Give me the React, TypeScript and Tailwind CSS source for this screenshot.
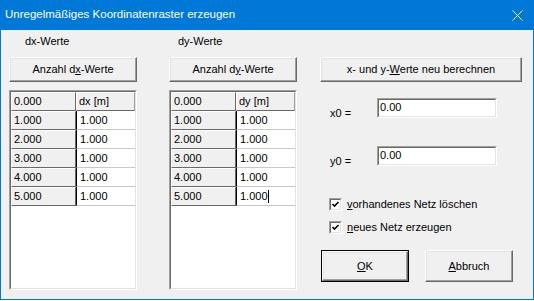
import React from "react";

const raised =
  "border border-t-white border-l-white border-b-[#696969] border-r-[#696969] shadow-[inset_-1px_-1px_0_#a0a0a0,inset_1px_1px_0_#e3e3e3]";

function Btn({ children, className = "" }: { children: React.ReactNode; className?: string }) {
  return (
    <div className={`flex items-center justify-center bg-[#f0f0f0] ${raised} ${className}`}>
      <span>{children}</span>
    </div>
  );
}

const rows = ["1.000", "2.000", "3.000", "4.000", "5.000"];

function Grid({ head }: { head: string }) {
  return (
    <div className="mt-[8px] h-[200px] w-[128px] border border-t-[#a0a0a0] border-l-[#a0a0a0] border-b-white border-r-white">
      <div className="h-full w-full bg-white border border-t-[#696969] border-l-[#696969] border-b-[#e3e3e3] border-r-[#e3e3e3]">
        <div className="flex h-[19px]">
          <div className="w-[65px] bg-[#f0f0f0] border border-t-white border-l-white border-b-[#696969] border-r-[#696969] pl-[2px] leading-[16px]">
            0.000
          </div>
          <div className="flex-1 bg-[#f0f0f0] border border-t-white border-l-white border-b-[#696969] border-r-[#a0a0a0] pl-[2px] leading-[16px]">
            {head}
          </div>
        </div>
        {rows.map((r, i) => (
          <div key={r} className="flex h-[19px]">
            <div className="w-[65px] bg-[#f0f0f0] border border-t-white border-l-white border-b-[#696969] border-r-[#696969] pl-[2px] leading-[16px]">
              {r}
            </div>
            <div className="flex flex-1 border-l border-l-[#000] border-b border-b-[#c8c8c8] pl-[3px] leading-[18px]">
              <span>1.000</span>
              {head === "dy [m]" && i === 4 && <span className="mt-[3px] h-[13px] w-px bg-black" />}
            </div>
          </div>
        ))}
      </div>
    </div>
  );
}

function Field({ label, value, className = "" }: { label: string; value: string; className?: string }) {
  return (
    <div className={`flex h-[20px] ${className}`}>
      <div className="ml-[10px] w-[47px] pt-[9px] leading-[13px]">{label}</div>
      <div className="h-[20px] w-[120px] border border-t-[#a0a0a0] border-l-[#a0a0a0] border-b-white border-r-white">
        <div className="h-full w-full bg-white border border-t-[#696969] border-l-[#696969] border-b-[#e3e3e3] border-r-[#e3e3e3] pl-[1px] leading-[15px]">
          {value}
        </div>
      </div>
    </div>
  );
}

function Check({ children, className = "" }: { children: React.ReactNode; className?: string }) {
  return (
    <div className={`ml-[9px] flex h-[13px] items-center gap-[5px] ${className}`}>
      <div className="h-[13px] w-[13px] border border-t-[#a0a0a0] border-l-[#a0a0a0] border-b-white border-r-white">
        <div className="h-full w-full bg-white border border-t-[#696969] border-l-[#696969] border-b-[#e3e3e3] border-r-[#e3e3e3]">
          <svg width="9" height="9" viewBox="0 0 9 9">
            <path d="M1.5 4 L3.5 6 L7.5 2" stroke="#000" strokeWidth="1.6" fill="none" />
          </svg>
        </div>
      </div>
      <span className="leading-[13px]">{children}</span>
    </div>
  );
}

export default function App() {
  return (
    <div className="h-[300px] w-[534px] text-[11px] text-black font-['Liberation_Sans',Arial,sans-serif]">
      {/* Title bar */}
      <div className="flex h-[30px] items-center justify-between bg-[#0078d7] pl-[5px] pr-[11px] text-[11.5px] text-white">
        <span>Unregelmäßiges Koordinatenraster erzeugen</span>
        <svg width="11" height="11" viewBox="0 0 11 11">
          <path d="M0.5 0.5 L10.5 10.5 M10.5 0.5 L0.5 10.5" stroke="#fff" strokeWidth="1" />
        </svg>
      </div>

      {/* Body */}
      <div className="flex h-[270px] border-l border-r border-b border-[#0078d7] bg-[#f0f0f0] pl-[8px]">
        <div className="flex w-[128px] flex-col pt-[5px]">
          <div className="ml-[16px] h-[13px] leading-[13px]">dx-Werte</div>
          <Btn className="mt-[9px] h-[25px]">
            Anzahl d<u>x</u>-Werte
          </Btn>
          <Grid head="dx [m]" />
        </div>

        <div className="ml-[32px] flex w-[128px] flex-col pt-[5px]">
          <div className="ml-[9px] h-[13px] leading-[13px]">dy-Werte</div>
          <Btn className="mt-[9px] h-[25px]">
            Anzahl d<u>y</u>-Werte
          </Btn>
          <Grid head="dy [m]" />
        </div>

        <div className="ml-[23px] flex w-[202px] flex-col pt-[27px]">
          <Btn className="h-[25px]">
            x- und y-<u>W</u>erte neu berechnen
          </Btn>
          <Field label="x0 =" value="0.00" className="mt-[16px]" />
          <Field label="y0 =" value="0.00" className="mt-[28px]" />
          <Check className="mt-[32px]">
            <u>v</u>orhandenes Netz löschen
          </Check>
          <Check className="mt-[10px]">
            <u>n</u>eues Netz erzeugen
          </Check>
          <div className="mt-[16px] flex gap-[16px] pl-[1px]">
            <div className="h-[32px] w-[88px] border border-[#000]">
              <Btn className="h-full w-full">
                <u>O</u>K
              </Btn>
            </div>
            <Btn className="h-[32px] w-[88px]">
              <u>A</u>bbruch
            </Btn>
          </div>
        </div>
      </div>
    </div>
  );
}
